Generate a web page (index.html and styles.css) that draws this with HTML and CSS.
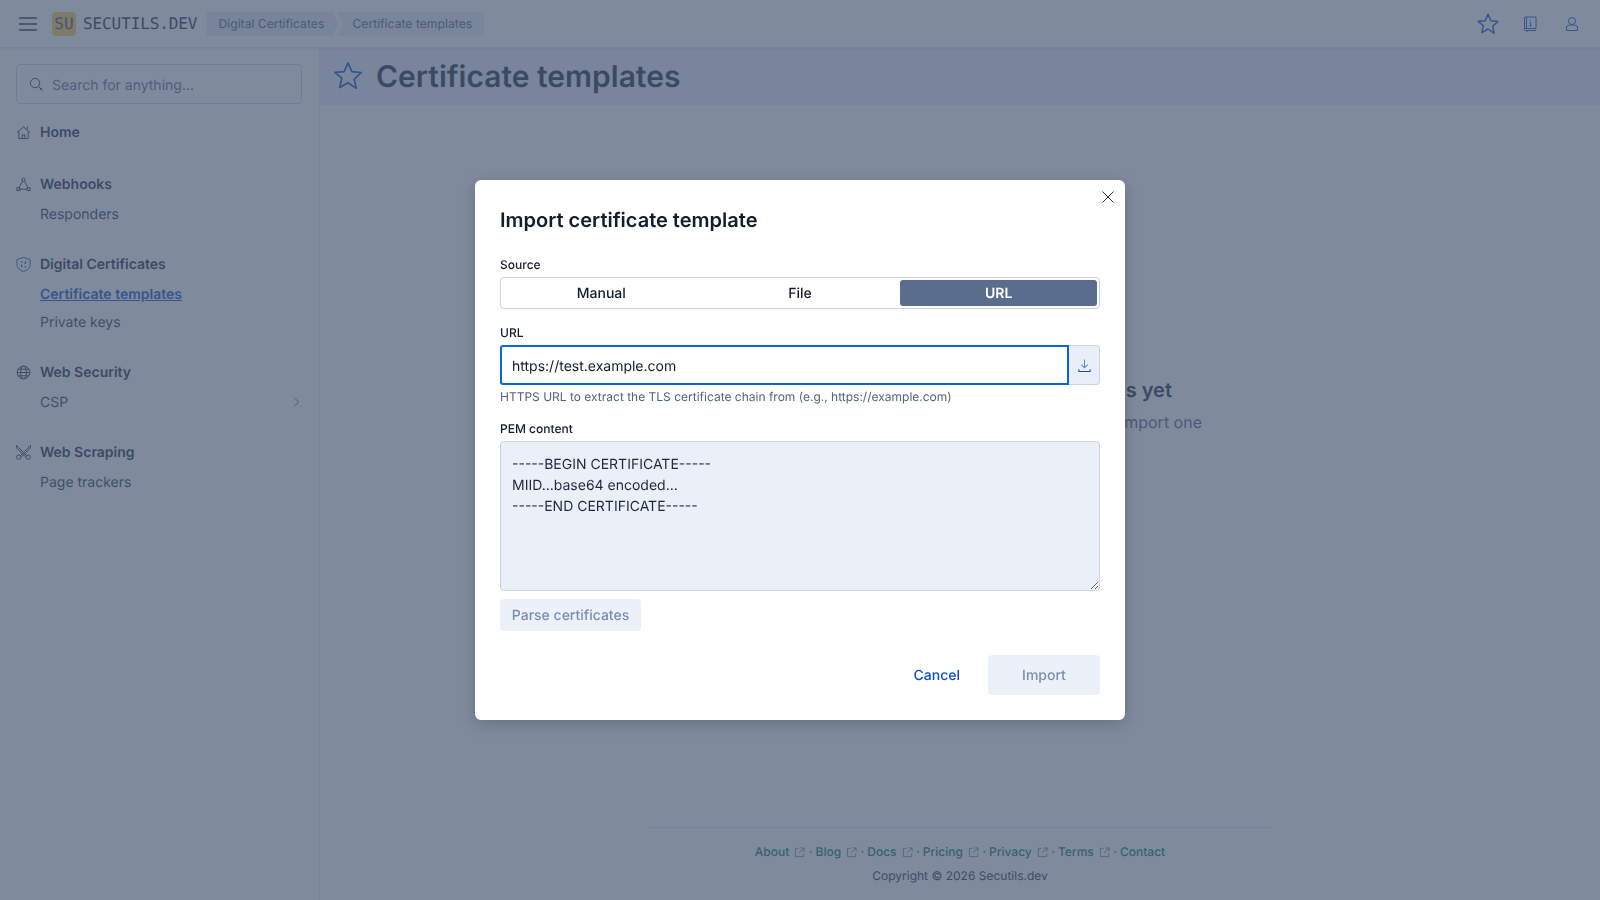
FILE: index.html
```html
<!DOCTYPE html>
<html lang="en">
<head>
<meta charset="utf-8">
<title>Certificate templates</title>
<link rel="stylesheet" href="styles.css">
</head>
<body>
<div class="app">
  <header class="topbar">
    <svg class="burger" viewBox="0 0 18 14"><path d="M0 1h18M0 7h18M0 13h18"/></svg>
    <span class="logo">SU</span>
    <span class="brand">SECUTILS.DEV</span>
    <nav class="crumbs">
      <span class="crumb crumb-first">Digital Certificates</span>
      <span class="crumb crumb-last">Certificate templates</span>
    </nav>
    <div class="top-actions">
      <svg class="ic-star" viewBox="0 0 24 24"><path d="M12 2.200l2.900 6.500 7 .8-5.200 4.800 1.400 7L12 17l-6.100 3.600 1.400-7L2.100 9.300l7-.6z"/></svg>
      <svg class="ic-top" viewBox="0 0 16 16"><path d="M2.500 13V2a1 1 0 0 1 1-1h10.500v11.500H3.500a1 1 0 0 0-1 1 1 1 0 0 0 1 1h10.500M4.500 1v11.500M5 14.500v1.500"/><path d="M8.500 3.800v1M7.300 6.800h1.200v3M7.300 9.800h2.500"/></svg>
      <svg class="ic-top" viewBox="0 0 16 16"><circle cx="8" cy="5" r="3.500"/><path d="M2.500 14.500v-2.500a3 3 0 0 1 3-3h5a3 3 0 0 1 3 3v2.500z"/></svg>
    </div>
  </header>
  <div class="shell">
    <aside class="sidebar">
      <label class="search">
        <svg class="ic-side" viewBox="0 0 16 16"><circle cx="6.500" cy="6.500" r="5"/><path d="M10 10l4.500 4.500M12 14l2-2"/></svg>
        <input class="search-input" type="text" placeholder="Search for anything...">
      </label>
      <div class="nav-group nav-home">
        <div class="nav-title"><svg class="ic-side" viewBox="0 0 16 16"><path d="M1 8l7-6 7 6M3 7v7.500h10V7M6.500 14.500v-4h3v4M12 1.500v3"/></svg>Home</div>
      </div>
      <div class="nav-group">
        <div class="nav-title"><svg class="ic-side" viewBox="0 0 16 16"><circle cx="8" cy="3" r="1.800"/><rect x="1" y="11.500" width="3" height="3"/><rect x="12" y="11.500" width="3" height="3"/><path d="M7 4.500l-4 7M9 4.500l4 7M4 13h8"/></svg>Webhooks</div>
        <div class="nav-item">Responders</div>
      </div>
      <div class="nav-group">
        <div class="nav-title"><svg class="ic-side ic-accent" viewBox="0 0 16 16"><path d="M8 .5l7 2.200v5.300c0 3.700-3 6.200-7 7.500-4-1.300-7-3.800-7-7.500V2.700z"/><path d="M6 4.500v1.500M6 8v3M10 4.500v3M10 9.500v2" class="ic-thick"/></svg>Digital Certificates</div>
        <div class="nav-item nav-active">Certificate templates</div>
        <div class="nav-item">Private keys</div>
      </div>
      <div class="nav-group">
        <div class="nav-title"><svg class="ic-side" viewBox="0 0 16 16"><circle cx="8" cy="8" r="6.800"/><ellipse cx="8" cy="8" rx="3" ry="6.800"/><path d="M1.200 8h13.600M2.200 4.500h11.600M2.200 11.500h11.600"/></svg>Web Security</div>
        <div class="nav-item nav-split">CSP<svg class="ic-chevron" viewBox="0 0 16 16"><path d="M5.500 2l6 6-6 6"/></svg></div>
      </div>
      <div class="nav-group">
        <div class="nav-title"><svg class="ic-side" viewBox="0 0 16 16"><circle cx="3" cy="13" r="2.300"/><circle cx="13" cy="13" r="2.300"/><path d="M4.500 11.500L15.500 .5l.0 2.500L6 12.500M11.500 11.500L.5 .5l0 2.500L10 12.500"/></svg>Web Scraping</div>
        <div class="nav-item">Page trackers</div>
      </div>
    </aside>
    <main class="main">
      <div class="page-head">
        <svg class="ic-page" viewBox="0 0 24 24"><path d="M12 2.200l2.900 6.500 7 .8-5.200 4.800 1.400 7L12 17l-6.100 3.600 1.400-7L2.100 9.300l7-.6z"/></svg>
        <h1 class="page-title">Certificate templates</h1>
      </div>
      <div class="page-body">
        <h2 class="empty-title">You don't have any certificate templates yet</h2>
        <p class="empty-text">Go ahead and generate a new certificate template or import one</p>
      </div>
      <footer class="foot">
        <div class="foot-links">
          <a class="foot-link">About<svg class="ic-ext" viewBox="0 0 12 12"><path d="M10.500 7v3.500h-9v-9H5M7 1h4v4M11 1L5.500 6.500"/></svg></a><span class="dot">·</span>
          <a class="foot-link">Blog<svg class="ic-ext" viewBox="0 0 12 12"><path d="M10.500 7v3.500h-9v-9H5M7 1h4v4M11 1L5.500 6.500"/></svg></a><span class="dot">·</span>
          <a class="foot-link">Docs<svg class="ic-ext" viewBox="0 0 12 12"><path d="M10.500 7v3.500h-9v-9H5M7 1h4v4M11 1L5.500 6.500"/></svg></a><span class="dot">·</span>
          <a class="foot-link">Pricing<svg class="ic-ext" viewBox="0 0 12 12"><path d="M10.500 7v3.500h-9v-9H5M7 1h4v4M11 1L5.500 6.500"/></svg></a><span class="dot">·</span>
          <a class="foot-link">Privacy<svg class="ic-ext" viewBox="0 0 12 12"><path d="M10.500 7v3.500h-9v-9H5M7 1h4v4M11 1L5.500 6.500"/></svg></a><span class="dot">·</span>
          <a class="foot-link">Terms<svg class="ic-ext" viewBox="0 0 12 12"><path d="M10.500 7v3.500h-9v-9H5M7 1h4v4M11 1L5.500 6.500"/></svg></a><span class="dot">·</span>
          <a class="foot-link">Contact</a>
        </div>
        <div class="copyright">Copyright © 2026 Secutils.dev</div>
      </footer>
    </main>
  </div>
</div>

<div class="overlay">
  <section class="modal">
    <svg class="modal-close" viewBox="0 0 16 16"><path d="M2.500 2.500l11 11M13.500 2.500l-11 11"/></svg>
    <h2 class="modal-title">Import certificate template</h2>
    <div class="field field-first">
      <div class="label">Source</div>
      <div class="segments">
        <span class="segment">Manual</span>
        <span class="segment">File</span>
        <span class="segment segment-on">URL</span>
      </div>
    </div>
    <div class="field">
      <div class="label">URL</div>
      <div class="url-row">
        <input class="url-input" type="text" value="https://test.example.com">
        <span class="url-append"><svg class="ic-download" viewBox="0 0 16 16"><path class="dl-arrow" d="M8 1.500v9M4.500 7L8 10.500 11.500 7"/><path d="M2 12v2.500h12V12"/></svg></span>
      </div>
      <div class="help">HTTPS URL to extract the TLS certificate chain from (e.g., https://example.com)</div>
    </div>
    <div class="field">
      <div class="label">PEM content</div>
      <textarea class="pem" readonly>-----BEGIN CERTIFICATE-----
MIID...base64 encoded...
-----END CERTIFICATE-----</textarea>
      <button class="btn-parse" type="button">Parse certificates</button>
    </div>
    <div class="actions">
      <button class="btn-cancel" type="button">Cancel</button>
      <button class="btn-import" type="button">Import</button>
    </div>
  </section>
</div>
</body>
</html>
```
FILE: styles.css
```css
* { box-sizing: border-box; text-rendering: geometricPrecision; }
html, body { margin: 0; height: 100%; }
body {
  font-family: Inter, "Liberation Sans", sans-serif;
  font-size: 14px;
  color: #1d2a3e;
  background: #fff;
  overflow: hidden;
}
svg { fill: none; stroke: currentColor; stroke-width: 1; flex: none; display: block; }

.app { height: 900px; display: flex; flex-direction: column; }

.topbar {
  height: 48px;
  flex: none;
  display: flex;
  align-items: center;
  padding: 0 0 0 19px;
  border-bottom: 1px solid #e3e8f2;
  box-shadow: 0 1px 3px rgba(43, 57, 79, .12);
  position: relative;
}
.burger { width: 18px; height: 14px; color: #1d2a3e; stroke-width: 1.4; }
.logo {
  width: 24px; height: 24px;
  margin-left: 15px;
  border-radius: 4px;
  background: #f7d04a;
  color: #3a4a80;
  font: 16px "DejaVu Sans Mono", monospace;
  display: flex; align-items: center; justify-content: center;
}
.brand { margin-left: 7px; font: 16px/24px "DejaVu Sans Mono", monospace; letter-spacing: -.1px; color: #1d2a3e; }
.crumbs { display: flex; margin-left: 9px; height: 24px; font-size: 12.2px; color: #516381; }
.crumb { display: flex; align-items: center; background: #e3e9f6; }
.crumb-first {
  padding: 0 14px 0 12px;
  border-radius: 4px 0 0 4px;
  clip-path: polygon(0 0, calc(100% - 6px) 0, 100% 50%, calc(100% - 6px) 100%, 0 100%);
}
.crumb-last {
  margin-left: -2px;
  padding: 0 12px 0 16px;
  border-radius: 0 4px 4px 0;
  clip-path: polygon(0 0, 100% 0, 100% 100%, 0 100%, 6px 50%);
  background: #e9edf8;
}
.top-actions { margin-left: auto; display: flex; align-items: center; padding-right: 20px; color: #0b4fc4; }
.ic-star { width: 24px; height: 24px; stroke-width: 1.5; stroke-linejoin: round; margin-right: 22px; }
.ic-top { width: 16px; height: 16px; }
.ic-top + .ic-top { margin-left: 26px; }

.shell { flex: 1; display: flex; min-height: 0; }
.sidebar {
  width: 320px;
  flex: none;
  padding: 16px 17px 0 16px;
  border-right: 1px solid #e3e8f2;
}
.search {
  height: 40px;
  display: flex;
  align-items: center;
  gap: 8px;
  padding: 0 12px;
  border: 1px solid #cad3e2;
  border-radius: 4px;
  margin-bottom: 16px;
}
.search-input {
  flex: 1; min-width: 0;
  border: 0; outline: 0; background: transparent; padding: 2px 0 0;
  font: 14px Inter, sans-serif;
  color: #1d2a3e;
}
.search-input::placeholder { color: #5a6d8c; opacity: 1; }
.nav-group { margin-bottom: 24px; }
.nav-home { margin-bottom: 28px; }
.nav-title {
  height: 24px;
  display: flex; align-items: center; gap: 9px;
  font-weight: 600;
  color: #1d2a3e;
}
.ic-side { width: 15px; height: 15px; color: #1d2a3e; }
.ic-accent { color: #1d4ea8; }
.ic-thick { stroke-width: 1.4; }
.nav-item {
  height: 28px;
  margin-left: 24px;
  display: flex; align-items: center;
  color: #2b394f;
}
.nav-title + .nav-item { margin-top: 4px; }
.nav-active { color: #0b4fc4; font-weight: 600; text-decoration: underline; }
.nav-split { justify-content: space-between; padding-right: 0; }
.ic-chevron { width: 12px; height: 12px; color: #2b394f; }

.main { flex: 1; min-width: 0; display: flex; flex-direction: column; }
.page-head {
  height: 57px;
  flex: none;
  display: flex; align-items: center;
  padding: 0 0 0 12px;
  gap: 12px;
  background: #ebeffa;
  border-bottom: 1px solid #e6ebf3;
}
.ic-page { width: 32px; height: 32px; color: #0b4fc4; stroke-width: 1.3; stroke-linejoin: round; }
.page-title { margin: 1px 0 0; font-size: 30px; line-height: 36px; font-weight: 600; color: #1d2a3e; }
.page-body { flex: 1; padding-top: 272px; text-align: center; }
.empty-title { margin: 0 0 7px; font-size: 20px; line-height: 26px; font-weight: 600; color: #1d2a3e; }
.empty-text { margin: 0; font-size: 16px; line-height: 24px; color: #516381; }
.foot {
  flex: none;
  width: 624px;
  margin: 0 auto;
  height: 73px;
  padding-top: 16px;
  border-top: 1px solid #e3e8f2;
  text-align: center;
  font-size: 12px;
  line-height: 16px;
}
.foot-links { display: flex; justify-content: center; align-items: center; gap: 3px; }
.foot-link { display: flex; align-items: center; gap: 5px; color: #007a60; font-weight: 500; }
.dot { color: #1d2a3e; }
.ic-ext { width: 11px; height: 11px; color: #5d9080; margin-right: .7px; }
.copyright { margin-top: 8px; color: #1d2a3e; }

.overlay {
  position: fixed;
  inset: 0;
  background: rgba(72, 88, 116, .7);
  display: flex; align-items: center; justify-content: center;
}
.modal {
  position: relative;
  width: 650px;
  height: 540px;
  padding: 26px 25px 25px;
  background: #fff;
  border-radius: 6px;
  box-shadow: 0 4px 16px rgba(7, 16, 31, .2);
}
.modal-close { position: absolute; top: 9px; right: 9px; width: 16px; height: 16px; color: #111c2d; stroke-width: .9; }
.modal-title { margin: 0; font-size: 20px; line-height: 28px; font-weight: 600; color: #111c2d; }
.field { margin-top: 16px; }
.field-first { margin-top: 23px; }
.label { font-size: 12px; line-height: 16px; font-weight: 500; color: #111c2d; margin-bottom: 4px; }
.segments {
  height: 32px;
  display: grid; grid-template-columns: repeat(3, 1fr);
  padding: 2px 1px;
  border: 1px solid #cad3e2;
  border-radius: 4px;
}
.segment {
  display: flex; align-items: center; justify-content: center;
  margin: 0 1px;
  font-weight: 500; color: #111c2d;
  border-radius: 3px;
}
.segment-on { background: #5a6d8c; color: #fff; font-weight: 600; }
.url-row { display: flex; height: 40px; }
.url-input {
  flex: 1; min-width: 0;
  padding: 2px 10px 0;
  border: 2px solid #0b64dd;
  border-radius: 3px 0 0 3px;
  outline: 0;
  font: 14px Inter, sans-serif;
  color: #111c2d;
}
.url-append {
  width: 31px;
  display: flex; align-items: center; justify-content: center;
  background: #e9eef9;
  border: 1px solid #cad3e2;
  border-left: 0;
  border-radius: 0 4px 4px 0;
  color: #0b4fc4;
}
.ic-download { width: 15px; height: 15px; stroke-width: 1.1; }
.dl-arrow { stroke: #5c8ce0; }
.help { margin-top: 4px; font-size: 12px; line-height: 16px; color: #516381; }
.pem {
  display: block;
  width: 100%;
  height: 150px;
  padding: 12px 11px;
  background: #ebeff8;
  border: 1px solid #cad3e2;
  border-radius: 4px;
  outline: 0;
  font: 14px/21px Inter, sans-serif;
  color: #1d2a3e;
}
.btn-parse, .btn-import {
  border: 0;
  border-radius: 4px;
  background: #ecf1f9;
  color: #798eae;
  font: 500 14px Inter, sans-serif;
  padding: 0;
}
.btn-parse { display: block; margin-top: 8px; height: 32px; width: 141px; }
.actions { margin-top: 24px; display: flex; justify-content: flex-end; align-items: center; gap: 28px; }
.btn-cancel { border: 0; background: none; padding: 0; color: #0b4fc4; font: 500 14px Inter, sans-serif; }
.btn-import { width: 112px; height: 40px; }
```
